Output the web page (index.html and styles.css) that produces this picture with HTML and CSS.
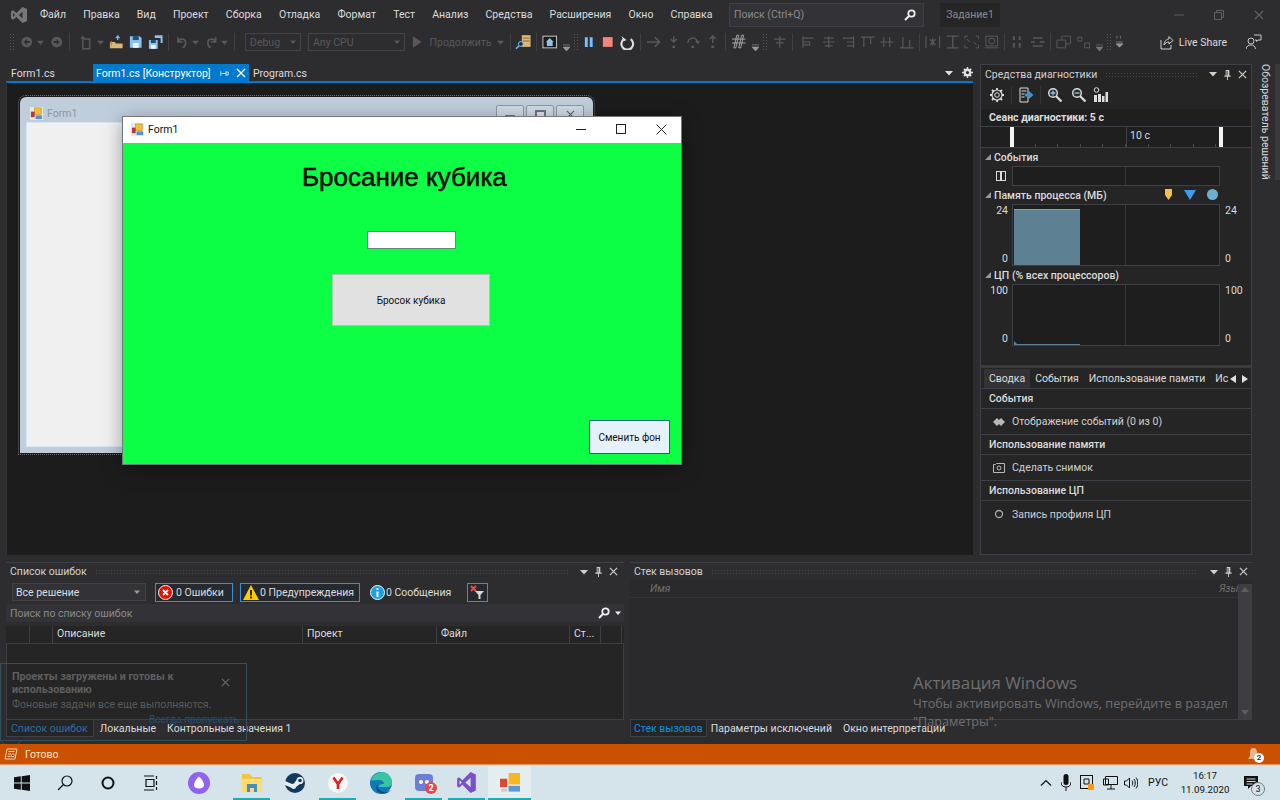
FILE: index.html
```html
<!DOCTYPE html>
<html lang="ru">
<head>
    <meta charset="UTF-8">
    <title>WindowsFormsApp - Microsoft Visual Studio</title>
    <link rel="stylesheet" href="styles.css">
</head>
<body>
<svg class="defs" width="0" height="0">
    <symbol id="caret" viewBox="0 0 8 8"><path d="M0 2h8L4 6.500z" fill="currentColor"/></symbol>
    <symbol id="pin" viewBox="0 0 10 12"><path d="M3 1h4v6h1.500v1.500H5.500V12h-1V8.500H1.500V7H3zM4 2v5h1V2z" fill="currentColor"/></symbol>
    <symbol id="close" viewBox="0 0 10 10"><path d="M1 1l8 8M9 1L1 9" stroke="currentColor" stroke-width="1.300" fill="none"/></symbol>
    <symbol id="lens" viewBox="0 0 12 12"><circle cx="7.500" cy="4.500" r="3.200" fill="none" stroke="currentColor" stroke-width="1.800"/><path d="M5 7l-4 4" stroke="currentColor" stroke-width="2"/></symbol>
    <symbol id="form-ico" viewBox="0 0 14 14"><rect x="0" y="0" width="14" height="14" fill="#e8e8ec"/><rect x="5" y="1" width="7" height="7" fill="#f2c037" stroke="#b8860b" stroke-width=".6"/><rect x="1" y="5" width="4" height="6" fill="#b5383a"/><rect x="6" y="9" width="7" height="4" fill="#5b8fd0"/></symbol>
</svg>

<div class="ide">
    <header class="menubar">
        <svg class="vs-logo" width="16" height="18" viewBox="0 0 16 18"><path d="M11.500 1L16 3v12l-4.500 2-6-6-3.500 2.700L0 12.500v-7L2 4.300 5.500 7zM11.500 5.500L8 9l3.500 3.500zM2 7v4l2-2z" fill="#77777b" fill-rule="evenodd"/></svg>
        <nav class="menu">
            <span>Файл</span><span>Правка</span><span>Вид</span><span>Проект</span><span>Сборка</span><span>Отладка</span><span>Формат</span><span>Тест</span><span>Анализ</span><span>Средства</span><span>Расширения</span><span>Окно</span><span>Справка</span>
        </nav>
        <div class="search-box">
            <span>Поиск (Ctrl+Q)</span>
            <svg width="12" height="12"><use href="#lens"/></svg>
        </div>
        <div class="solution-name">Задание1</div>
        <div class="win-controls">
            <svg width="10" height="10" viewBox="0 0 10 10"><path d="M0 5h10" stroke="currentColor"/></svg>
            <svg width="10" height="10" viewBox="0 0 10 10"><path d="M2.500 2.500V.5h7v7h-2M.5 2.500h7v7h-7z" stroke="currentColor" fill="none"/></svg>
            <svg width="10" height="10"><use href="#close"/></svg>
        </div>
    </header>

    <div class="toolbar">
        <i class="grip"></i>
        <svg class="tb" viewBox="0 0 20 16"><circle cx="10" cy="8" r="5.500" fill="#58585c"/><path d="M7 8l3-3v2h3v2h-3v2z" fill="#2d2d30"/></svg>
        <svg class="dd" viewBox="0 0 8 8"><use href="#caret"/></svg>
        <svg class="tb" viewBox="0 0 20 16"><circle cx="10" cy="8" r="5.500" fill="#58585c"/><path d="M13 8l-3-3v2H7v2h3v2z" fill="#2d2d30"/></svg>
        <i class="sep wide"></i>
        <svg class="tb" viewBox="0 0 20 16"><path d="M6 5h7v10H6z" fill="none" stroke="#58585c" stroke-width="1.500"/><path d="M6 1l1 2 2 1-2 1-1 2-1-2-2-1 2-1z" fill="#58585c"/></svg>
        <svg class="dd" viewBox="0 0 8 8"><use href="#caret"/></svg>
        <svg class="tb" viewBox="0 0 20 16"><path d="M3 8h5l1 1.500h7v5H3z" fill="#dcb67a"/><path d="M3 8l2-1v7z" fill="#b58a44"/><path d="M11 6V2l-2 2m2-2l2 2" stroke="#75beff" stroke-width="1.300" fill="none"/></svg>
        <svg class="tb" viewBox="0 0 20 16"><path d="M4 2h10l2 2v10H4z" fill="#8dc0ec"/><rect x="7" y="2" width="6" height="4" fill="#1e4f7a"/><rect x="7" y="9" width="6" height="5" fill="#e8f2fb"/></svg>
        <svg class="tb" viewBox="0 0 20 16"><path d="M9 1h8v8h-2V4H9z" fill="#8dc0ec"/><path d="M3 6h9v9H3z" fill="#8dc0ec"/><rect x="5" y="6" width="5" height="3" fill="#1e4f7a"/><rect x="5" y="11" width="5" height="4" fill="#e8f2fb"/></svg>
        <i class="sep"></i>
        <svg class="tb" viewBox="0 0 20 16"><path d="M6 3v5h5M6 8c2-4 8-4 8 1 0 2-1 4-3 5" stroke="#58585c" stroke-width="1.700" fill="none"/></svg>
        <svg class="dd" viewBox="0 0 8 8"><use href="#caret"/></svg>
        <svg class="tb" viewBox="0 0 20 16"><path d="M14 3v5H9M14 8c-2-4-8-4-8 1 0 2 1 4 3 5" stroke="#58585c" stroke-width="1.700" fill="none"/></svg>
        <svg class="dd" viewBox="0 0 8 8"><use href="#caret"/></svg>
        <i class="sep"></i>
        <div class="combo debug">Debug<svg width="6" height="6"><use href="#caret"/></svg></div>
        <div class="combo cpu">Any CPU<svg width="6" height="6"><use href="#caret"/></svg></div>
        <svg class="tb play" viewBox="0 0 20 16"><path d="M5 2l9 6-9 6z" fill="#58585c"/></svg>
        <span class="tb-text">Продолжить</span>
        <svg class="dd" viewBox="0 0 8 8"><use href="#caret"/></svg>
        <i class="sep"></i>
        <svg class="tb" viewBox="0 0 20 16"><path d="M8 1h9v12H8z" fill="#dcb67a"/><path d="M9 4h7M9 7h7" stroke="#8a6a35"/><circle cx="7" cy="10" r="2.500" fill="#2d2d30" stroke="#75beff"/><path d="M5 12l-3 3" stroke="#75beff" stroke-width="1.500"/></svg>
        <i class="sep"></i>
        <svg class="tb" viewBox="0 0 20 16"><rect x="3" y="2" width="14" height="12" fill="#1b1b1c" stroke="#c8c8c8"/><path d="M10 4l4 4h-1v4H7V8H6z" fill="#8dc0ec"/></svg>
        <svg class="dd low" viewBox="0 0 8 8"><path d="M0 1h8M0 3.500h8L4 8z" stroke="#999" stroke-width=".7" fill="#999"/></svg>
        <i class="grip"></i>
        <svg class="tb pull" viewBox="0 0 20 16"><path d="M6 3h3v10H6zM11 3h3v10h-3z" fill="#75beff"/></svg>
        <svg class="tb" viewBox="0 0 20 16"><rect x="5" y="3" width="10" height="10" fill="#f1877a"/></svg>
        <svg class="tb" viewBox="0 0 20 16"><path d="M6 5a6 6 0 1 0 7 0" stroke="#e0e0e0" stroke-width="2.200" fill="none"/><path d="M5 1v6h3z" fill="#e0e0e0" transform="rotate(-25 6 5)"/></svg>
        <i class="sep"></i>
        <svg class="tb" viewBox="0 0 20 16"><path d="M3 8h13M11 3l5 5-5 5" stroke="#58585c" stroke-width="1.500" fill="none"/></svg>
        <svg class="tb" viewBox="0 0 20 16"><path d="M10 2v6M7 5l3 3 3-3" stroke="#58585c" stroke-width="1.500" fill="none"/><circle cx="10" cy="13" r="1.500" fill="#58585c"/></svg>
        <svg class="tb" viewBox="0 0 20 16"><path d="M5 9a5 5 0 0 1 10 0l-2-2m2 2l2-2" stroke="#58585c" stroke-width="1.500" fill="none"/><circle cx="10" cy="13" r="1.500" fill="#58585c"/></svg>
        <svg class="tb" viewBox="0 0 20 16"><path d="M10 9V2M7 5l3-3 3 3" stroke="#58585c" stroke-width="1.500" fill="none"/><circle cx="10" cy="13" r="1.500" fill="#58585c"/></svg>
        <i class="sep"></i>
        <svg class="tb" viewBox="0 0 20 16"><path d="M5 14L8 1h2L7 14zM10 14L13 1h2l-3 13zM3 5h14M3 9h14" stroke="#b0b0b0" stroke-width=".9" fill="none"/></svg>
        <svg class="dd low" viewBox="0 0 8 8"><path d="M0 1h8M0 3.500h8L4 8z" stroke="#999" stroke-width=".7" fill="#999"/></svg>
        <i class="grip"></i>
        <svg class="tb" viewBox="0 0 20 16"><path d="M10 2v12M4 5h12M6 9h8" stroke="#58585c" stroke-width="1.300" fill="none"/></svg>
        <i class="sep align-gap"></i>
        <svg class="tb" viewBox="0 0 20 16"><path d="M4 2v12M4 4h11M4 8h7v3H4" stroke="#58585c" stroke-width="1.200" fill="none"/></svg>
        <svg class="tb" viewBox="0 0 20 16"><path d="M10 2v12M5 4h10M4 8h12M6 12h8" stroke="#58585c" stroke-width="1.200" fill="none"/></svg>
        <svg class="tb" viewBox="0 0 20 16"><path d="M16 2v12M5 4h11M9 8h7M9 12h7" stroke="#58585c" stroke-width="1.200" fill="none"/></svg>
        <svg class="tb" viewBox="0 0 20 16"><path d="M3 3h14M6 3v10M13 3v7" stroke="#58585c" stroke-width="1.200" fill="none"/></svg>
        <svg class="tb" viewBox="0 0 20 16"><path d="M3 8h14M7 3v10M13 3v10" stroke="#58585c" stroke-width="1.200" fill="none"/></svg>
        <svg class="tb" viewBox="0 0 20 16"><path d="M3 14h14M6 3v11M13 6v8" stroke="#58585c" stroke-width="1.200" fill="none"/></svg>
        <i class="sep"></i>
        <svg class="tb" viewBox="0 0 20 16"><path d="M3 2v12M17 2v12M7 5l6 6M13 5l-6 6M10 4v8" stroke="#58585c" stroke-width="1.200" fill="none"/></svg>
        <svg class="tb" viewBox="0 0 20 16"><path d="M4 2h12M4 14h12M10 2v12" stroke="#58585c" stroke-width="1.400" fill="none"/></svg>
        <svg class="tb" viewBox="0 0 20 16"><path d="M3 5V2h3M14 2h3v3M3 11v3h3M14 14h3v-3M8 8l-3-3M12 8l3 3" stroke="#58585c" fill="none"/></svg>
        <svg class="tb" viewBox="0 0 20 16"><rect x="4" y="2" width="12" height="10" stroke="#58585c" fill="none"/><circle cx="10" cy="7" r="3" stroke="#58585c" fill="none"/><path d="M3 14h14" stroke="#58585c"/></svg>
        <i class="sep"></i>
        <svg class="tb" viewBox="0 0 20 16"><path d="M6 2v4M6 9v5M12 2v4M12 9v5" stroke="#58585c" stroke-width="2" fill="none"/></svg>
        <svg class="tb" viewBox="0 0 20 16"><path d="M5 4h10M3 8h4M12 8h5M5 12h10" stroke="#58585c" stroke-width="1.500" fill="none"/></svg>
        <i class="sep"></i>
        <svg class="tb" viewBox="0 0 20 16"><path d="M3 6h9v8H3zM8 6V2h9v8h-5" stroke="#58585c" fill="none"/></svg>
        <svg class="tb" viewBox="0 0 20 16"><path d="M4 3h4v4H4zM11 9h5v5h-5z" stroke="#58585c" fill="none"/></svg>
        <svg class="dd low" viewBox="0 0 8 8"><path d="M0 1h8M0 3.500h8L4 8z" stroke="#777" stroke-width=".7" fill="#777"/></svg>
        <i class="grip"></i>
        <svg class="dd tall" viewBox="0 0 8 14"><path d="M1 0v3M5 0v3M0 7h8M0 9h8L4 13z" stroke="#999" fill="#999" stroke-width=".7"/></svg>
        <div class="live-share">
            <svg width="15" height="15" viewBox="0 0 15 15"><path d="M2 5v9h10V10" stroke="#d0d0d0" fill="none"/><path d="M5 10c0-4 3-6 5-6V1.500L14 5.500 10 9V7C8 7 6 8 5 10z" stroke="#d0d0d0" fill="none"/></svg>
            <span>Live Share</span>
        </div>
        <svg class="feedback" width="16" height="16" viewBox="0 0 16 16"><circle cx="5" cy="7" r="3" stroke="#c8c8c8" fill="none"/><path d="M0 15c.5-3 2.500-4 5-4s4 1 4.500 4M8 1h7v5h-3l-1.500 1.500V6H9" stroke="#c8c8c8" fill="none"/></svg>
    </div>

    <div class="workspace">
        <section class="doc-well">
            <div class="doc-tabs">
                <span class="doc-tab first">Form1.cs</span>
                <span class="doc-tab active">Form1.cs [Конструктор]
                    <svg width="9" height="9" viewBox="0 0 10 12"><path d="M1 6h6M7 3v6M7 4h3v4H7M0 3v6" stroke="#fff" fill="none"/></svg>
                    <svg width="10" height="10"><use href="#close"/></svg>
                </span>
                <span class="doc-tab">Program.cs</span>
                <span class="doc-tools">
                    <svg width="8" height="8"><use href="#caret"/></svg>
                    <svg width="11" height="11" viewBox="0 0 12 12"><circle cx="6" cy="6" r="3" fill="none" stroke="#e0e0e0" stroke-width="2.500"/><path d="M6 0v2.500M6 9.500V12M0 6h2.500M9.500 6H12M2 2l1.500 1.500M8.500 8.500L10 10M10 2L8.500 3.500M3.500 8.500L2 10" stroke="#e0e0e0" stroke-width="1.500"/></svg>
                </span>
            </div>
            <div class="designer">
                <div class="design-form">
                    <div class="design-title">
                        <svg width="13" height="13"><use href="#form-ico"/></svg>
                        <span>Form1</span>
                        <div class="design-btns">
                            <i><b class="d-min"></b></i><i><b class="d-max"></b></i><i class="x-btn"><svg width="9" height="9"><use href="#close"/></svg></i>
                        </div>
                    </div>
                    <div class="design-client"></div>
                </div>
                <div class="run-form">
                    <div class="run-title">
                        <svg width="13" height="13"><use href="#form-ico"/></svg>
                        <span>Form1</span>
                        <div class="run-controls">
                            <svg width="10" height="10" viewBox="0 0 10 10"><path d="M0 5.500h10" stroke="#222"/></svg>
                            <svg width="10" height="10" viewBox="0 0 10 10"><rect x=".5" y=".5" width="9" height="9" stroke="#222" fill="none"/></svg>
                            <svg width="11" height="11" viewBox="0 0 11 11"><path d="M.5.5l10 10M10.500.5l-10 10" stroke="#222" fill="none"/></svg>
                        </div>
                    </div>
                    <div class="run-client">
                        <h1 class="dice-title">Бросание кубика</h1>
                        <input class="dice-value" type="text">
                        <button class="dice-roll" type="button">Бросок кубика</button>
                        <button class="change-bg" type="button">Сменить фон</button>
                    </div>
                </div>
            </div>
        </section>

        <section class="diag">
            <div class="pane-head"><span>Средства диагностики</span><i class="dots"></i>
                <svg width="8" height="8"><use href="#caret"/></svg><svg width="9" height="11"><use href="#pin"/></svg><svg width="9" height="9"><use href="#close"/></svg>
            </div>
            <div class="diag-tools">
                <svg width="16" height="16" viewBox="0 0 16 16"><circle cx="8" cy="8" r="2.300" fill="none" stroke="#ddd"/><circle cx="8" cy="8" r="5" fill="none" stroke="#ddd" stroke-width="1.200"/><path d="M8 1v2M8 13v2M1 8h2M13 8h2M3 3l1.500 1.500M11.500 11.500L13 13M13 3l-1.500 1.500M4.500 11.500L3 13" stroke="#ddd" stroke-width="1.800"/></svg>
                <i></i>
                <svg width="16" height="16" viewBox="0 0 16 16"><path d="M2 1h8v14H2z" stroke="#ddd" fill="none"/><path d="M3.500 4h5M3.500 7h3M3.500 10h3" stroke="#ddd"/><path d="M7 6.500h4V4l4.500 4-4.500 4V9.500H7z" fill="#3794d8"/></svg>
                <i></i>
                <svg width="16" height="16" viewBox="0 0 16 16"><circle cx="6" cy="6" r="4.300" fill="#2d2d30" stroke="#ddd" stroke-width="1.400"/><path d="M9 9l5.500 5.500" stroke="#ddd" stroke-width="2.200"/><path d="M6 3.500v5M3.500 6h5" stroke="#7fc0ee" stroke-width="1.400"/></svg>
                <svg class="zoom-out" width="16" height="16" viewBox="0 0 16 16"><circle cx="6" cy="6" r="4.300" fill="#2d2d30" stroke="#ddd" stroke-width="1.400"/><path d="M9 9l5.500 5.500" stroke="#ddd" stroke-width="2.200"/><path d="M3.500 6h5" stroke="#7fc0ee" stroke-width="1.400"/></svg>
                <svg width="16" height="16" viewBox="0 0 16 16"><circle cx="3.500" cy="3" r="2.300" fill="none" stroke="#ddd"/><path d="M5 7h3v8H5zM9 9h2.500v6H9zM12.500 5H15v10h-2.500zM1 8h3v7H1z" fill="#ddd"/></svg>
            </div>
            <div class="session">Сеанс диагностики: 5 с</div>
            <div class="ruler">
                <i class="ticks"></i>
                <i class="handle left"></i><span class="ruler-mid">10 с</span><i class="handle right"></i>
            </div>
            <div class="lane-title"><i class="tri"></i>События</div>
            <div class="lane events">
                <svg class="pause" width="10" height="10" viewBox="0 0 10 10"><rect x=".5" y=".5" width="9" height="9" fill="none" stroke="#ddd"/><path d="M5 0v10" stroke="#ddd" stroke-width="2"/></svg>
                <div class="plot short"></div>
            </div>
            <div class="lane-title"><i class="tri"></i>Память процесса (МБ)
                <span class="legend">
                    <svg width="8" height="11" viewBox="0 0 8 11"><path d="M0 0h7v6L3.500 11 0 6z" fill="#f2c14e"/></svg>
                    <svg width="12" height="10" viewBox="0 0 12 10"><path d="M0 0h12L6 10z" fill="#3f9ce8"/></svg>
                    <svg width="11" height="11"><circle cx="5.500" cy="5.500" r="5.500" fill="#6fb0d0"/></svg>
                </span>
            </div>
            <div class="lane chart">
                <div class="scale"><span>24</span><span>0</span></div>
                <div class="plot"><div class="mem-fill"></div></div>
                <div class="scale right"><span>24</span><span>0</span></div>
            </div>
            <div class="lane-title"><i class="tri"></i>ЦП (% всех процессоров)</div>
            <div class="lane chart">
                <div class="scale"><span>100</span><span>0</span></div>
                <div class="plot"><div class="cpu-line"></div></div>
                <div class="scale right"><span>100</span><span>0</span></div>
            </div>
            <div class="diag-split"></div>
            <div class="diag-tabs">
                <span class="sel">Сводка</span><span>События</span><span>Использование памяти</span><span class="cut">Ис</span>
                <div class="tab-arrows"><svg width="6" height="8" viewBox="0 0 6 8"><path d="M6 0v8L0 4z" fill="#e0e0e0"/></svg><svg width="6" height="8" viewBox="0 0 6 8"><path d="M0 0v8l6-4z" fill="#e0e0e0"/></svg></div>
            </div>
            <div class="sum-head">События</div>
            <div class="sum-row">
                <svg width="12" height="8" viewBox="0 0 12 8"><path d="M4 0L0 4l4 4 2-2 2 2 4-4-4-4-2 2z" fill="#b8b8b8"/></svg>
                Отображение событий (0 из 0)
            </div>
            <div class="sum-head">Использование памяти</div>
            <div class="sum-row">
                <svg width="12" height="10" viewBox="0 0 12 10"><path d="M.5 1.500h2l1-1h8v9H.5z" stroke="#b8b8b8" fill="none"/><circle cx="6" cy="5" r="2" stroke="#b8b8b8" fill="none"/></svg>
                Сделать снимок
            </div>
            <div class="sum-head">Использование ЦП</div>
            <div class="sum-row">
                <svg width="12" height="10" viewBox="0 0 12 10"><circle cx="6" cy="5" r="3.500" stroke="#a8a8a8" stroke-width="1.300" fill="none"/></svg>
                Запись профиля ЦП
            </div>
        </section>

        <aside class="side-rail"><span>Обозреватель решений</span></aside>

        <section class="tool-pane errors">
            <div class="pane-head"><span>Список ошибок</span><i class="dots"></i>
                <svg width="8" height="8"><use href="#caret"/></svg><svg width="9" height="11"><use href="#pin"/></svg><svg width="9" height="9"><use href="#close"/></svg>
            </div>
            <div class="err-tools">
                <div class="scope">Все решение<svg width="6" height="6"><use href="#caret"/></svg></div>
                <div class="err-btn on errs">
                    <svg width="15" height="15" viewBox="0 0 15 15"><circle cx="7.500" cy="7.500" r="7" fill="#e51400" stroke="#f4f4f4"/><path d="M5 5l5 5M10 5l-5 5" stroke="#fff" stroke-width="1.800"/></svg>0 Ошибки
                </div>
                <div class="err-btn on warns">
                    <svg width="16" height="15" viewBox="0 0 16 15"><path d="M8 0l8 15H0z" fill="#ffcc00"/><path d="M8 5v5.500M8 11.500v2" stroke="#111" stroke-width="1.700"/></svg>0 Предупреждения
                </div>
                <div class="err-btn msgs">
                    <svg width="15" height="15" viewBox="0 0 15 15"><circle cx="7.500" cy="7.500" r="7" fill="#1ba1e2" stroke="#e8f4fc"/><path d="M7.500 3v2M7.500 6.500V12" stroke="#fff" stroke-width="2"/></svg>0 Сообщения
                </div>
                <div class="err-btn on filter">
                    <svg width="16" height="14" viewBox="0 0 16 14"><path d="M1 1l5 5M6 1L1 6" stroke="#e05050" stroke-width="2"/><path d="M5 6h9l-3.500 4v4h-2v-4z" fill="#d8d8d8"/></svg>
                </div>
            </div>
            <div class="err-search">
                <span>Поиск по списку ошибок</span>
                <svg width="12" height="12"><use href="#lens"/></svg>
                <svg width="6" height="6"><use href="#caret"/></svg>
            </div>
            <div class="err-table">
                <span class="c0"></span><span class="c1"></span><span class="c2">Описание</span><span class="c3">Проект</span><span class="c4">Файл</span><span class="c5">Ст...</span><span class="c6"></span>
            </div>
            <div class="err-body"></div>
            <div class="pane-tabs">
                <span class="sel">Список ошибок</span><span>Локальные</span><span>Контрольные значения 1</span>
            </div>
        </section>

        <section class="tool-pane stack">
            <div class="pane-head"><span>Стек вызовов</span><i class="dots"></i>
                <svg width="8" height="8"><use href="#caret"/></svg><svg width="9" height="11"><use href="#pin"/></svg><svg width="9" height="9"><use href="#close"/></svg>
            </div>
            <div class="stack-main">
                <div class="stack-table">
                    <div class="stack-head"><span>Имя</span><span>Язык</span></div>
                </div>
                <div class="scrollbar">
                    <svg width="8" height="6" viewBox="0 0 8 6"><path d="M0 5h8L4 0z" fill="#5e5e62"/></svg>
                    <svg width="8" height="6" viewBox="0 0 8 6"><path d="M0 0h8L4 5z" fill="#5e5e62"/></svg>
                </div>
            </div>
            <div class="pane-tabs">
                <span class="sel">Стек вызовов</span><span>Параметры исключений</span><span>Окно интерпретации</span>
            </div>
        </section>
    </div>

    <footer class="statusbar">
        <svg width="14" height="12" viewBox="0 0 14 12"><path d="M3 1h10l-2 10H1z" fill="none" stroke="#f0d0b0"/><path d="M4.500 3.500h6M4 6h3M3.500 8.500h3M8 6h2v2.500H7.500z" stroke="#f0d0b0"/></svg>
        <span>Готово</span>
        <div class="bell">
            <svg width="11" height="13" viewBox="0 0 11 13"><path d="M5.500 0C8 0 9 2 9 4.500V8l2 3H0l2-3V4.500C2 2 3 0 5.500 0z" fill="#e8b48c"/></svg>
            <b>2</b>
        </div>
    </footer>

    <div class="taskbar">
        <div class="task-left">
            <span class="task-ico"><svg width="16" height="16" viewBox="0 0 16 16"><path d="M0 2.300l6.800-1v6.300H0zM7.700 1.200L16 0v7.600H7.700zM0 8.400h6.800v6.300l-6.800-1zM7.700 8.400H16V16l-8.300-1.200z" fill="#111"/></svg></span>
            <span class="task-ico"><svg width="16" height="16" viewBox="0 0 16 16"><circle cx="10" cy="6" r="5" fill="none" stroke="#111" stroke-width="1.200"/><path d="M6.500 9.500L1 15" stroke="#111" stroke-width="1.300"/></svg></span>
            <span class="task-ico"><svg width="14" height="14"><circle cx="7" cy="7" r="5.500" fill="none" stroke="#111" stroke-width="2"/></svg></span>
            <span class="task-ico"><svg width="16" height="16" viewBox="0 0 16 16"><path d="M1 1h10M1 15h10M3 4.500h8v7H3zM13.500 1v3M13.500 6v4M13.500 12v3" stroke="#111" fill="none" stroke-width="1.200"/></svg></span>
            <span class="task-ico alice"><svg width="22" height="22" viewBox="0 0 22 22"><circle cx="11" cy="11" r="11" fill="#8f63f0"/><path d="M11 4.500c3 2.500 5 6 5 8.500 0 2.500-2.500 3.500-5 3.500S6 15.500 6 13c0-2.500 2-6 5-8.500z" fill="#fff"/></svg></span>
            <span class="task-ico run"><svg width="20" height="19" viewBox="0 0 20 19"><path d="M0 1h8l2 3h10v15H0z" fill="#f4c542"/><path d="M0 6h20v13H0z" fill="#ffdc6b"/><path d="M5 11h10v8h-3v-4H8v4H5z" fill="#3d8ec9"/></svg></span>
            <span class="task-ico"><svg width="20" height="20" viewBox="0 0 20 20"><circle cx="10" cy="10" r="10" fill="#123a5e"/><path d="M0 12l6 2.500a3 3 0 0 0 5.500-1L15 11a3.500 3.500 0 1 0-3.500-4L9 10.500a3 3 0 0 0-2 .5L0 8z" fill="#e8eef2"/><circle cx="15" cy="7.500" r="1.800" fill="#123a5e"/></svg></span>
            <span class="task-ico run"><svg width="20" height="20" viewBox="0 0 20 20"><circle cx="10" cy="10" r="10" fill="#f7f7f7"/><path d="M5.500 4.500L10 11v5M14.500 4.500L10 11" stroke="#e0201a" stroke-width="2.600" fill="none"/></svg></span>
            <span class="task-ico"><svg width="22" height="22" viewBox="0 0 22 22"><circle cx="11" cy="11" r="11" fill="#1079b8"/><path d="M1 8C3 2 9 0 13 0c5 1 9 5 9 11 0 3-3 4-6 4H9c0-3 3-3 5-3 0-3-3-4-5-4-3 0-6 1-8 0z" fill="#37c6a5"/><path d="M7 12c0 5 4 8 9 8 2 0 3-1 5-2-3 4-9 5-13 2-2-2-2-5-1-8z" fill="#0b4f8a"/></svg></span>
            <span class="task-ico run badge-wrap"><svg width="18" height="17" viewBox="0 0 18 17"><rect width="18" height="17" rx="4" fill="#6c7fd8"/><circle cx="6" cy="8" r="2" fill="#fff"/><circle cx="12" cy="8" r="2" fill="#fff"/></svg><b class="task-badge">2</b></span>
            <span class="task-ico run"><svg width="21" height="21" viewBox="0 0 16 18"><path d="M11.500 0L16 2.200v13.600L11.500 18 4.500 11 1.500 13.500 0 12.500v-7L1.500 4.500l3 2.500zM11.500 5L7 9l4.500 4zM2 7v4l2-2z" fill="#7a4fc9" fill-rule="evenodd"/></svg></span>
            <span class="task-ico run active"><svg width="20" height="20" viewBox="0 0 14 14"><rect x="6" y="0" width="8" height="8" fill="#f5b81f"/><rect x="0" y="4" width="5" height="6" fill="#d9483b"/><rect x="6" y="9" width="8" height="4" fill="#5b96d8"/><rect x="1" y="11" width="4" height="2" fill="#c8c8c8"/></svg></span>
        </div>
        <div class="tray">
            <svg width="12" height="7" viewBox="0 0 12 7"><path d="M1 6.500l5-5 5 5" stroke="#111" stroke-width="1.200" fill="none"/></svg>
            <svg width="10" height="18" viewBox="0 0 10 18"><rect x="2.500" y="0" width="5" height="11" rx="2.500" fill="#111"/><path d="M0 8c0 3.500 2 5 5 5s5-1.500 5-5M5 13v4" stroke="#111" fill="none"/></svg>
            <svg width="14" height="16" viewBox="0 0 14 16"><rect x=".5" y=".5" width="12" height="13" stroke="#111" fill="none"/><path d="M4 4h5v5H4z" stroke="#111" fill="none"/><rect x="8" y="9" width="6" height="6" fill="#f59a1c"/></svg>
            <svg class="net" width="15" height="15" viewBox="0 0 15 15"><path d="M2.500 1.500h12v8h-12zM8 9.500V14M4 14h8M.5 4h5v6h-5z" stroke="#111" fill="none"/></svg>
            <svg width="14" height="14" viewBox="0 0 14 14"><path d="M.5 5v4h2l3 3V2l-3 3zM8 4.500c1 1.500 1 3.500 0 5M10 3c1.700 2 1.700 6 0 8M12 1.500c2.300 3 2.300 8 0 11" stroke="#111" fill="none"/></svg>
            <span class="lang">РУС</span>
            <div class="clock"><span>16:17</span><span>11.09.2020</span></div>
            <div class="notif">
                <svg width="14" height="14" viewBox="0 0 14 14"><path d="M0 0h14v10H7l-3 3v-3H0z" fill="#111"/><path d="M2.500 3h9M2.500 5.500h9M2.500 8h6" stroke="#d4e4ea"/></svg>
                <b>3</b>
            </div>
        </div>
    </div>

    <div class="toast">
        <div class="toast-title">Проекты загружены и готовы к использованию</div>
        <svg class="toast-x" width="9" height="9"><use href="#close"/></svg>
        <div class="toast-text">Фоновые задачи все еще выполняются.</div>
        <div class="toast-link">Всегда пропускать</div>
        <svg class="toast-tail" width="20" height="3" viewBox="0 0 20 3"><path d="M0 0l3 3M20 0l-3 3" stroke="#3c4c55" fill="none"/></svg>
    </div>

    <div class="activation">
        <div class="act-big">Активация Windows</div>
        <div>Чтобы активировать Windows, перейдите в раздел</div>
        <div>"Параметры".</div>
    </div>
</div>
</body>
</html>
```

FILE: styles.css
```css
* {
    box-sizing: border-box;
}
html, body {
    margin: 0;
    height: 100%;
    overflow: hidden;
}
body {
    font-family: Roboto, "Noto Sans", sans-serif;
    font-size: 10.5px;
    color: #dcdcdc;
    background: #2d2d30;
}
.defs {
    position: absolute;
}
.ide {
    position: relative;
    width: 1280px;
    height: 800px;
    display: flex;
    flex-direction: column;
}

/* title + menu */
.menubar {
    height: 29px;
    display: flex;
    align-items: center;
    padding-left: 11px;
    flex: none;
}
.vs-logo {
    margin-right: 13px;
}
.menu {
    display: flex;
    gap: 17.2px;
    width: 689px;
    white-space: nowrap;
}
.search-box {
    width: 195px;
    height: 24px;
    background: #333337;
    border: 1px solid #3f3f46;
    display: flex;
    align-items: center;
    justify-content: space-between;
    padding: 0 7px 0 4px;
    color: #8a8a8a;
}
.search-box svg {
    color: #f0f0f0;
}
.solution-name {
    margin-left: 16px;
    width: 60px;
    height: 24px;
    background: #252526;
    color: #8a8a8a;
    display: flex;
    align-items: center;
    justify-content: center;
}
.win-controls {
    margin-left: auto;
    display: flex;
    gap: 30px;
    padding-right: 16px;
    color: #5f5f62;
}

/* main toolbar */
.toolbar {
    height: 26px;
    flex: none;
    display: flex;
    align-items: center;
    padding: 0 18px 0 9px;
    color: #58585c;
}
.grip {
    width: 5px;
    height: 18px;
    margin: 0 3px 0 0;
    background-image: radial-gradient(#57575b 1px, transparent 1px);
    background-size: 3px 3px;
    flex: none;
}
.sep {
    width: 1px;
    height: 18px;
    background: #3f3f42;
    margin: 0 3px;
    flex: none;
}
.sep.wide {
    margin-right: 7px;
}
.sep.align-gap {
    margin-right: 6px;
}
.tb {
    flex: none;
    height: 16px;
    width: 19.5px;
}
.tb.pull {
    margin-left: -2px;
}
.dd {
    width: 7px;
    height: 7px;
    margin: 0 3px 0 0;
    flex: none;
    color: #58585c;
}
.dd.low {
    margin: 10px 3px 0 3px;
    height: 9px;
}
.dd.tall {
    height: 14px;
    margin-left: 2px;
}
.combo {
    height: 18px;
    border: 1px solid #434346;
    display: flex;
    align-items: center;
    justify-content: space-between;
    padding: 0 4px;
    flex: none;
}
.debug {
    width: 56px;
    margin: 0 7px 0 7px;
}
.cpu {
    width: 97px;
    margin-right: 3px;
}
.tb-text {
    margin: 0 5px 0 2px;
    flex: none;
}
.live-share {
    display: flex;
    align-items: center;
    gap: 5px;
    color: #dcdcdc;
    margin-left: auto;
    flex: none;
}
.feedback {
    margin-left: 19px;
    flex: none;
}

/* docked panes */
.workspace {
    flex: 1;
    min-height: 0;
    display: grid;
    grid-template-columns: 618px 6px 343px 7px 272px 28px;
    grid-template-rows: 491px 182px;
    row-gap: 7px;
    padding: 9px 0 0 6px;
}
.doc-well {
    grid-column: 1 / 4;
    display: flex;
    flex-direction: column;
    min-height: 0;
}
.diag {
    grid-column: 5;
    grid-row: 1;
    border: 1px solid #3f3f46;
    display: flex;
    flex-direction: column;
    background: #252526;
    min-height: 0;
}
.side-rail {
    position: relative;
    grid-column: 6;
    grid-row: 1;
    padding-left: 7px;
}
.side-rail span {
    display: block;
    writing-mode: vertical-rl;
    white-space: nowrap;
    color: #d8d8d8;
}
.side-rail::after {
    content: "";
    position: absolute;
    right: 0;
    top: 0;
    width: 5px;
    height: 116px;
    background: #3a3a3d;
}
.doc-tabs {
    height: 17px;
    display: flex;
    align-items: center;
    flex: none;
    white-space: nowrap;
}
.doc-tab {
    padding: 1px 4px 0;
    height: 17px;
    display: flex;
    align-items: center;
    gap: 7px;
}
.doc-tab.first {
    width: 87px;
    padding-left: 5px;
}
.doc-tab.active {
    background: #007acc;
    color: #fff;
    width: 156px;
    padding: 1px 3px 0;
}
.doc-tab.active svg:first-of-type {
    margin-left: auto;
}
.doc-tools {
    margin-left: auto;
    display: flex;
    align-items: center;
    gap: 9px;
    color: #e0e0e0;
}
.designer {
    position: relative;
    flex: 1;
    background: #1c1c1d;
    border-top: 2px solid #007acc;
    border-left: 1px solid #333;
}

/* form being edited, with the running one over it */
.design-form {
    position: absolute;
    left: 13px;
    top: 14px;
    width: 573px;
    height: 356px;
    background: #c0cedb;
    border-radius: 6px 6px 0 0;
    outline: 1px dotted #6a6a6a;
    outline-offset: 1px;
    padding: 0 7px 7px;
    display: flex;
    flex-direction: column;
}
.design-title {
    height: 26px;
    padding: 6px 0 0 3px;
    display: flex;
    align-items: center;
    gap: 4px;
    color: #8b95a0;
}
.design-btns {
    margin: 2px 2px 0 auto;
    display: flex;
    gap: 2px;
    align-self: flex-start;
}
.design-btns i {
    width: 28px;
    height: 18px;
    border: 1px solid #8d9aa7;
    border-radius: 2px;
    background: #cfdae4;
    display: flex;
    align-items: center;
    justify-content: center;
    color: #5a6672;
}
.d-min {
    width: 10px;
    height: 4px;
    border: 1px solid #6a7682;
    background: #eee;
    margin-top: 6px;
}
.d-max {
    width: 11px;
    height: 9px;
    border: 2px solid #6a7682;
    background: #dde;
}
.design-client {
    flex: 1;
    background: #f0f0f0;
    box-shadow: 0 0 0 1px #d8e6f2;
}
.run-form {
    position: absolute;
    left: 115px;
    top: 33px;
    width: 560px;
    height: 349px;
    border: 1px solid #6f7a80;
    border-top-color: #777;
    display: flex;
    flex-direction: column;
    background: #fff;
    box-shadow: 0 4px 18px rgba(0, 0, 0, 0.35);
}
.run-title {
    height: 26px;
    display: flex;
    align-items: center;
    gap: 4px;
    padding: 0 0 2px 8px;
    color: #111;
    flex: none;
}
.run-controls {
    margin-left: auto;
    display: flex;
    align-items: center;
    gap: 30px;
    padding-right: 14px;
}
.run-client {
    position: relative;
    flex: 1;
    background: #0dff45;
}
.dice-title {
    position: absolute;
    left: 179px;
    top: 19px;
    margin: 0;
    font: 400 26px "Liberation Sans", Arial, sans-serif;
    -webkit-text-stroke: 0.5px #0a0a0a;
    color: #0a0a0a;
    white-space: nowrap;
}
.dice-value {
    position: absolute;
    left: 244px;
    top: 88px;
    width: 89px;
    height: 18px;
    border: 1px solid #5a8f70;
    background: #fff;
    padding: 0;
}
.dice-roll {
    position: absolute;
    left: 209px;
    top: 131px;
    width: 158px;
    height: 52px;
    background: #e1e1e1;
    border: 1px solid #a9c9ad;
    font: 10px Roboto, sans-serif;
    color: #111;
    padding: 0;
}
.change-bg {
    position: absolute;
    left: 466px;
    top: 277px;
    width: 81px;
    height: 34px;
    background: #e5f1fb;
    border: 1px solid #0f6a80;
    font: 10px Roboto, sans-serif;
    color: #111;
    padding: 0;
}

/* diagnostics */
.pane-head {
    height: 17px;
    display: flex;
    align-items: center;
    gap: 6px;
    padding: 0 4px;
    flex: none;
    color: #d0d0d0;
}
.diag .pane-head {
    padding-top: 1px;
}
.errors .pane-head {
    padding-right: 6px;
}
.pane-head .dots {
    flex: 1;
    height: 5px;
    background-image: radial-gradient(#46464a 1px, transparent 1px);
    background-size: 3px 3px;
    margin: 0 6px 0 2px;
}
.diag-tools {
    height: 27px;
    display: flex;
    align-items: center;
    gap: 6px;
    padding: 0 0 2px 8px;
    flex: none;
}
.diag-tools i {
    width: 1px;
    height: 18px;
    background: #333337;
}
.zoom-out {
    margin-left: 2px;
}
.session {
    height: 17px;
    background: #1f1f20;
    font-weight: 700;
    padding-left: 8px;
    display: flex;
    align-items: center;
    flex: none;
}
.ruler {
    position: relative;
    height: 22px;
    flex: none;
    border-top: 1px solid #3f3f46;
    border-bottom: 1px solid #3f3f46;
    background: #1f1f20;
}
.ticks {
    position: absolute;
    left: 32px;
    right: 28px;
    bottom: 0;
    height: 3px;
    background-image: repeating-linear-gradient(90deg, transparent 0 21.6px, #4a4a4d 21.6px 22.6px);
}
.handle {
    position: absolute;
    top: 0;
    width: 4px;
    height: 20px;
    background: #f4f4f4;
}
.handle.left {
    left: 29px;
}
.handle.right {
    left: 238px;
}
.ruler-mid {
    position: absolute;
    left: 145px;
    top: 0;
    height: 20px;
    padding-left: 3px;
    border-left: 1px solid #3f3f46;
    line-height: 18px;
}
.lane-title {
    height: 18px;
    display: flex;
    align-items: center;
    gap: 3px;
    padding-left: 4px;
    font-weight: 500;
    flex: none;
    position: relative;
}
.tri {
    width: 0;
    height: 0;
    border-left: 6px solid transparent;
    border-bottom: 6px solid #999;
}
.legend {
    position: absolute;
    right: 33px;
    top: 3px;
    display: flex;
    align-items: center;
    gap: 11px;
}
.lane {
    display: flex;
    flex: none;
}
.events {
    height: 20px;
    align-items: center;
    padding-left: 15px;
}
.pause {
    margin-right: 6px;
}
.plot {
    position: relative;
    width: 208px;
    height: 100%;
    border: 1px solid #3f3f46;
    background: #1e1e1f;
}
.plot::after {
    content: "";
    position: absolute;
    left: 112px;
    top: 0;
    bottom: 0;
    width: 1px;
    background: #38383b;
}
.chart {
    height: 62px;
}
.scale {
    width: 31px;
    height: 100%;
    display: flex;
    flex-direction: column;
    justify-content: space-between;
    align-items: flex-end;
    padding: 0 4px 0 0;
    line-height: 14px;
}
.scale.right {
    align-items: flex-start;
    padding: 0 0 0 5px;
}
.mem-fill {
    position: absolute;
    left: 1px;
    bottom: 0;
    width: 66px;
    height: 56px;
    background: #5d8193;
    border-top: 1px solid #7fa3b3;
}
.cpu-line {
    position: absolute;
    left: 1px;
    bottom: 0;
    width: 66px;
    height: 1px;
    background: #5d8193;
}
.cpu-line::before {
    content: "";
    position: absolute;
    left: 0;
    bottom: 0;
    border-left: 4px solid #5d8193;
    border-top: 4px solid transparent;
    border-right: 3px solid transparent;
}
.diag-split {
    height: 3px;
    margin-top: 19px;
    background: #3a3a3d;
    flex: none;
}
.diag-tabs {
    position: relative;
    height: 20px;
    display: flex;
    align-items: center;
    padding-left: 3px;
    gap: 10px;
    margin-top: 1px;
    border-bottom: 1px solid #3f3f46;
    flex: none;
    white-space: nowrap;
    overflow: hidden;
}
.diag-tabs .sel {
    background: #333337;
    padding: 0 5px;
    height: 19px;
    line-height: 19px;
    margin-right: -5px;
}
.tab-arrows {
    position: absolute;
    right: 0;
    top: 0;
    height: 19px;
    width: 22px;
    background: #252526;
    display: flex;
    align-items: center;
    gap: 6px;
    padding-left: 1px;
}
.sum-head {
    height: 20px;
    display: flex;
    align-items: center;
    padding-left: 8px;
    font-weight: 500;
    border-bottom: 1px solid #3f3f46;
    flex: none;
}
.sum-row {
    height: 26px;
    display: flex;
    align-items: center;
    gap: 7px;
    padding-left: 12px;
    border-bottom: 1px solid #3f3f46;
    color: #cfcfcf;
    flex: none;
}
.sum-row:last-child {
    border-bottom: 0;
}

/* error list + call stack */
.tool-pane {
    border-top: 1px solid #3f3f46;
    display: flex;
    flex-direction: column;
    min-height: 0;
    background: #2d2d30;
}
.errors {
    grid-column: 1;
    grid-row: 2;
}
.stack {
    grid-column: 3 / 6;
    grid-row: 2;
}
.err-tools {
    height: 24px;
    display: flex;
    align-items: center;
    padding-left: 6px;
    flex: none;
}
.scope {
    width: 134px;
    height: 18px;
    background: #333337;
    border: 1px solid #434346;
    padding: 0 5px 0 3px;
    display: flex;
    align-items: center;
    justify-content: space-between;
    margin-right: 9px;
}
.scope svg {
    color: #999;
}
.err-btn {
    height: 19px;
    display: flex;
    align-items: center;
    gap: 3px;
    padding: 0 2px;
    border: 1px solid transparent;
    margin-right: 7px;
    white-space: nowrap;
}
.err-btn svg {
    flex: none;
}
.err-btn.on {
    border-color: #3a8fd0;
    background: #252a30;
}
.errs {
    width: 78px;
}
.warns {
    width: 120px;
    gap: 1px;
}
.msgs {
    width: 93px;
    gap: 1px;
}
.filter {
    width: 21px;
}
.err-search {
    height: 18px;
    background: #333337;
    display: flex;
    align-items: center;
    gap: 5px;
    padding: 0 3px 0 4px;
    color: #8a8a8a;
    flex: none;
}
.err-search span {
    flex: 1;
}
.err-search svg {
    color: #f0f0f0;
}
.err-table {
    display: grid;
    grid-template-columns: 24px 23px 250px 134px 133px 31px 21px;
    height: 18px;
    margin-top: 4px;
    background: #252526;
    border-bottom: 1px solid #3f3f46;
    flex: none;
}
.err-table span {
    border-right: 1px solid #3f3f46;
    padding-left: 4px;
    line-height: 16px;
}
.err-body {
    flex: 1;
    border: 1px solid #3f3f46;
    border-top: 0;
    background: #252526;
}
.pane-tabs {
    height: 17px;
    margin-bottom: 7px;
    display: flex;
    align-items: center;
    flex: none;
    white-space: nowrap;
}
.pane-tabs span {
    padding: 1px 5px 0;
    height: 17px;
    line-height: 16px;
    margin-right: 1px;
}
.pane-tabs .sel {
    color: #0e8fe0;
    background: #252526;
    border: 1px solid #3f3f46;
    border-top: 0;
    padding: 1px 5px 0 4px;
}
.errors .pane-tabs .sel {
    color: #2a6f9e;
}
.stack .pane-tabs .sel {
    padding: 1px 3px 0;
    margin-right: -1px;
}
.stack-main {
    flex: 1;
    display: flex;
    background: #2a2a2c;
    border-bottom: 1px solid #3f3f46;
    min-height: 0;
}
.stack-table {
    flex: 1;
    overflow: hidden;
}
.stack-head {
    display: flex;
    justify-content: space-between;
    padding: 0 0 0 20px;
    height: 17px;
    margin: 1px -6px 0 0;
    line-height: 16px;
    color: #6d6d6f;
    font-style: italic;
    border-bottom: 1px solid #333337;
}
.scrollbar {
    width: 14px;
    margin-top: 4px;
    background: #3e3e42;
    display: flex;
    flex-direction: column;
    justify-content: space-between;
    align-items: center;
    padding: 3px 0;
}

/* status + windows taskbar */
.statusbar {
    height: 21px;
    margin-top: auto;
    background: #ca5100;
    color: #f6e6d8;
    display: flex;
    align-items: center;
    gap: 7px;
    padding-left: 4px;
    flex: none;
    border-bottom: 1px solid #e89860;
}
.bell {
    position: relative;
    margin-left: auto;
    margin-right: 21px;
    display: flex;
}
.bell b {
    position: absolute;
    left: 6px;
    top: 5px;
    width: 10px;
    height: 10px;
    border-radius: 50%;
    background: #fff;
    color: #333;
    font: 700 8px/10px Roboto, sans-serif;
    text-align: center;
}
.taskbar {
    height: 35px;
    background: #d4e4ea;
    display: flex;
    justify-content: space-between;
    flex: none;
    color: #111;
}
.task-left {
    display: flex;
}
.task-ico {
    position: relative;
    width: 43px;
    height: 35px;
    display: flex;
    align-items: center;
    justify-content: center;
    flex: none;
}
.task-left .alice {
    margin-left: 5px;
    margin-right: 10px;
}
.task-ico.run::after {
    content: "";
    position: absolute;
    left: 3px;
    right: 3px;
    bottom: 0;
    height: 2px;
    background: #17aeb4;
}
.task-ico.active {
    background: #e4eef1;
}
.task-ico.active::after {
    left: 0;
    right: 0;
}
.task-badge {
    position: absolute;
    left: 23px;
    top: 17px;
    width: 12px;
    height: 12px;
    border-radius: 50%;
    background: #e5484d;
    color: #fff;
    font: 700 9px/12px Roboto, sans-serif;
    text-align: center;
}
.tray {
    display: flex;
    align-items: center;
    gap: 9px;
    padding-right: 7px;
}
.tray .net + svg {
    margin-left: -3px;
}
.lang {
    margin-left: 1px;
}
.clock {
    display: flex;
    flex-direction: column;
    align-items: center;
    line-height: 14px;
    width: 52px;
    margin-left: 2px;
    font-size: 9.7px;
}
.notif {
    position: relative;
    width: 29px;
    margin-left: 4px;
    display: flex;
}
.notif b {
    position: absolute;
    left: 7px;
    top: 6px;
    width: 14px;
    height: 14px;
    border-radius: 50%;
    border: 1px solid #777;
    background: #d4e4ea;
    font: 400 9px/12px Roboto, sans-serif;
    text-align: center;
}

/* overlays */
.toast {
    position: absolute;
    left: 0;
    top: 663px;
    width: 247px;
    height: 78px;
    border: 1px solid #35505c;
    padding: 6px 11px;
    color: #6a6a6a;
    font-size: 10.5px;
    line-height: 13px;
    pointer-events: none;
}
.toast-title {
    width: 190px;
    font-size: 10.7px;
    font-weight: 700;
    color: #5f5f5f;
}
.toast-text {
    margin-top: 2px;
    color: #5a5a5a;
}
.toast-x {
    position: absolute;
    right: 16px;
    top: 14px;
    color: #666;
}
.toast-link {
    position: absolute;
    right: 7px;
    top: 49px;
    font-size: 10.2px;
    color: #234f70;
}
.toast-tail {
    position: absolute;
    left: 0;
    top: 77px;
}
.activation {
    position: absolute;
    left: 913px;
    top: 672px;
    color: #6f6f72;
    font-family: "Open Sans", sans-serif;
    font-size: 12.65px;
    line-height: 18px;
    white-space: nowrap;
    pointer-events: none;
}
.act-big {
    font-size: 16.9px;
    line-height: 22px;
}
```
